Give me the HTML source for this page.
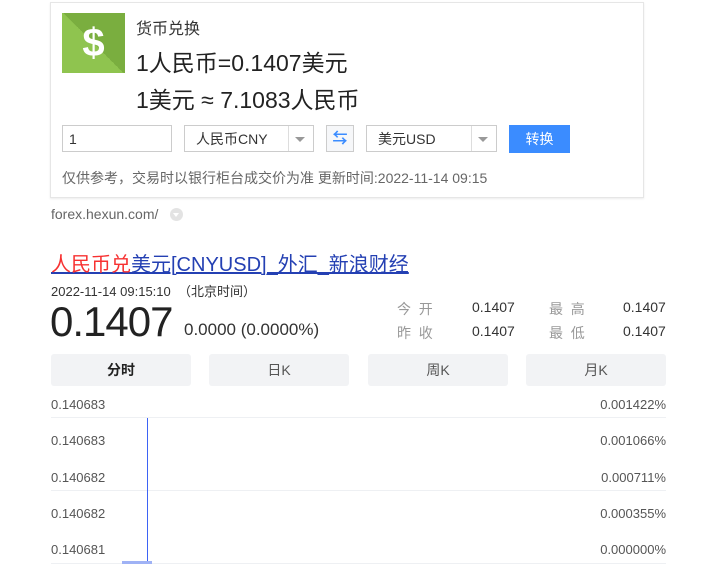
<!DOCTYPE html>
<html><head><meta charset="utf-8"><style>
body{margin:0;width:710px;height:573px;background:#fff;font-family:"Liberation Sans","Noto Sans CJK SC",sans-serif;position:relative;overflow:hidden;color:#222}
.a{position:absolute;white-space:nowrap}
.card{position:absolute;left:50px;top:2px;width:592px;height:194px;border:1px solid #e6e6e6;box-shadow:0 1px 2px rgba(0,0,0,.08)}
.box{position:absolute;border:1px solid #ccc;height:27px;box-sizing:border-box;font-size:14px;line-height:26px;color:#333}
.tab{position:absolute;top:354px;height:32px;width:140px;background:#f2f3f5;border-radius:3px;text-align:center;line-height:32px;font-size:14px;color:#555}
.gl{position:absolute;left:51px;width:615px;height:1px;background:#eef0f3}
.yl{position:absolute;left:51px;font-size:13px;color:#555}
.yr{position:absolute;right:44px;font-size:13px;color:#555}
.st{position:absolute;font-size:14px;color:#999}
.sv{position:absolute;font-size:14px;color:#333}
</style></head><body>
<div class="card"></div>
<div class="a" style="left:62px;top:13px;width:63px;height:60px;background:linear-gradient(45deg,#8fc44f 50%,#7aae3f 50%);overflow:hidden">
<div style="position:absolute;left:0;top:0;width:63px;height:60px;text-align:center;color:#fff;font-weight:bold;font-size:40px;line-height:60px">$</div></div>
<div class="a" style="left:136px;top:15px;font-size:16px;color:#333">货币兑换</div>
<div class="a" style="left:136px;top:44px;font-size:23px;color:#222">1人民币=0.1407美元</div>
<div class="a" style="left:136px;top:81px;font-size:23px;color:#222">1美元 ≈ 7.1083人民币</div>
<div class="box" style="left:62px;top:125px;width:110px;padding-left:6px">1</div>
<div class="box" style="left:184px;top:125px;width:130px;padding-left:11px">人民币CNY<span style="position:absolute;left:103px;top:0;width:1px;height:25px;background:#ddd"></span><span style="position:absolute;left:110px;top:11px;border:5px solid transparent;border-top:5px solid #999;border-bottom:0"></span></div>
<div class="box" style="left:326px;top:125px;width:28px;background:#f6f7f9;color:#3b8cff;text-align:center;font-size:15px;font-weight:bold">⇆</div>
<div class="box" style="left:366px;top:125px;width:131px;padding-left:11px">美元USD<span style="position:absolute;left:104px;top:0;width:1px;height:25px;background:#ddd"></span><span style="position:absolute;left:111px;top:11px;border:5px solid transparent;border-top:5px solid #999;border-bottom:0"></span></div>
<div class="a" style="left:509px;top:125px;width:61px;height:28px;background:#3b8cff;color:#fff;font-size:14px;text-align:center;line-height:28px">转换</div>
<div class="a" style="left:62px;top:168px;font-size:14px;color:#666">仅供参考，交易时以银行柜台成交价为准 更新时间:2022-11-14 09:15</div>
<div class="a" style="left:51px;top:206px;font-size:14px;color:#666">forex.hexun.com/</div>
<div class="a" style="left:170px;top:208px;width:13px;height:13px;border-radius:50%;background:#e3e3e3"><span style="position:absolute;left:3px;top:5px;border:3.5px solid transparent;border-top:4px solid #fff;border-bottom:0"></span></div>
<div class="a" style="left:51px;top:248px;font-size:20px;text-decoration:underline;color:#2440b3"><span style="color:#f73131">人民币兑</span>美元[CNYUSD]_外汇_新浪财经</div>
<div class="a" style="left:51px;top:281px;font-size:13px;color:#333">2022-11-14 09:15:10 &nbsp;（北京时间）</div>
<div class="a" style="left:50px;top:298px;font-size:42px;color:#222;line-height:48px;letter-spacing:-1px">0.1407</div>
<div class="a" style="left:184px;top:320px;font-size:17px;color:#333">0.0000 (0.0000%)</div>
<div class="st" style="left:397px;top:299px">今 &nbsp;开</div><div class="sv" style="left:472px;top:299px">0.1407</div>
<div class="st" style="left:549px;top:299px">最 &nbsp;高</div><div class="sv" style="left:623px;top:299px">0.1407</div>
<div class="st" style="left:397px;top:323px">昨 &nbsp;收</div><div class="sv" style="left:472px;top:323px">0.1407</div>
<div class="st" style="left:549px;top:323px">最 &nbsp;低</div><div class="sv" style="left:623px;top:323px">0.1407</div>
<div class="tab" style="left:51px;color:#222;font-weight:bold">分时</div>
<div class="tab" style="left:209px">日K</div>
<div class="tab" style="left:368px">周K</div>
<div class="tab" style="left:526px">月K</div>
<div class="gl" style="top:417px"></div><div class="gl" style="top:490px"></div><div class="gl" style="top:563px"></div>
<div class="yl" style="top:397px">0.140683</div><div class="yr" style="top:397px">0.001422%</div>
<div class="yl" style="top:433px">0.140683</div><div class="yr" style="top:433px">0.001066%</div>
<div class="yl" style="top:470px">0.140682</div><div class="yr" style="top:470px">0.000711%</div>
<div class="yl" style="top:506px">0.140682</div><div class="yr" style="top:506px">0.000355%</div>
<div class="yl" style="top:542px">0.140681</div><div class="yr" style="top:542px">0.000000%</div>
<div class="a" style="left:147px;top:418px;width:1px;height:145px;background:#3d63f5"></div>
<div class="a" style="left:122px;top:561px;width:30px;height:3px;background:#9fb2f5"></div>
</body></html>
